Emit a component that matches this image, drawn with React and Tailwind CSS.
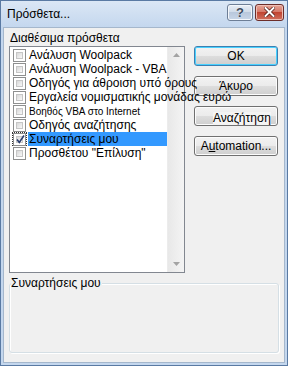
import React from "react";

const font = { fontFamily: '"Liberation Sans", Arial, sans-serif' };

function Check({ checked }) {
  return (
    <div className="w-[13px] h-[13px] border border-[#8e8f8f] bg-white p-[2px] shrink-0 relative">
      <div className="w-full h-full bg-gradient-to-br from-[#d8d8d8] to-[#f8f8f8] border border-[#c6c6c6]" />
      {checked && (
        <svg className="absolute left-[1px] top-[0px]" width="11" height="11" viewBox="0 0 11 11">
          <path d="M2 5.5 L4.3 8.5 L9 1.5" fill="none" stroke="#2a3d6e" strokeWidth="1.6" />
        </svg>
      )}
    </div>
  );
}

function Item({ text, checked, selected, small, focus }) {
  return (
    <div className="h-[14px] flex items-center relative">
      <div className={"ml-[2px] w-[15px] h-[14px] shrink-0 flex items-center justify-center " + (focus ? "outline outline-1 outline-dotted outline-[#333] -outline-offset-1" : "")}>
        <Check checked={checked} />
      </div>
      <div
        className={
          "ml-[1px] h-[14px] flex items-center whitespace-nowrap relative z-10 " +
          (selected ? "bg-[#3399ff] w-[139px]" : "") +
          (small ? " text-[10px]" : " text-[12px]")
        }
      >
        <span className="pl-[1px] text-black">{text}</span>
      </div>
    </div>
  );
}

function Btn({ children, def, extra }) {
  return (
    <div
      className={
        "h-[20px] w-[84px] rounded-[3px] border flex items-center justify-center text-[12px] text-black " +
        (def ? "border-[#3c7fb1] shadow-[inset_0_0_0_1px_#48d1ff]" : "border-[#707070] shadow-[inset_0_0_0_1px_#fcfcfc]") +
        " bg-[linear-gradient(#f2f2f2_0%,#ebebeb_50%,#dddddd_50%,#cfcfcf_100%)] " +
        (extra || "")
      }
    >
      {children}
    </div>
  );
}

export default function App() {
  const items = [
    { t: "Ανάλυση Woolpack" },
    { t: "Ανάλυση Woolpack - VBA" },
    { t: "Οδηγός για άθροιση υπό όρους" },
    { t: "Εργαλεία νομισματικής μονάδας ευρώ" },
    { t: "Βοηθός VBA στο Internet", small: true },
    { t: "Οδηγός αναζήτησης" },
    { t: "Συναρτήσεις μου", checked: true, selected: true, focus: true },
    { t: "Προσθέτου \"Επίλυση\"" },
  ];
  return (
    <div style={font} className="w-[288px] h-[366px] bg-[#c4d7ee] border border-[#5a7aa3] flex flex-col px-[2px] pb-[2px] overflow-hidden">
      {/* Title bar */}
      <div className="h-[26px] shrink-0 flex items-center -mx-[2px] px-[6px] bg-[linear-gradient(#dbe7f5,#c4d7ee)]">
        <div className="text-[12px] text-black flex-1">Πρόσθετα...</div>
        <div className="flex gap-[2px] -mr-[3px] -mt-[4px]">
          <div className="w-[26px] h-[17px] rounded-[3px] border border-[#6d7e96] bg-[linear-gradient(#e8eef6_0%,#cfdae8_50%,#b9c8dc_50%,#c8d6e8_100%)] flex items-center justify-center shadow-[inset_0_0_0_1px_#f4f7fb]">
            <span className="text-[13px] font-bold text-[#3c4a5c] leading-none" style={{ textShadow: "0 0 1px #fff" }}>?</span>
          </div>
          <div className="w-[29px] h-[17px] rounded-[3px] border border-[#6c2d29] bg-[linear-gradient(#e7a597_0%,#d47565_50%,#c14431_50%,#d0705f_100%)] flex items-center justify-center shadow-[inset_0_0_0_1px_#eebfb5]">
            <svg width="11" height="10" viewBox="0 0 11 10">
              <path d="M1.5 1 L9.5 9 M9.5 1 L1.5 9" stroke="#4a1510" strokeWidth="3.4" strokeLinecap="square" />
              <path d="M1.5 1 L9.5 9 M9.5 1 L1.5 9" stroke="#ffffff" strokeWidth="2" strokeLinecap="square" />
            </svg>
          </div>
        </div>
      </div>
      {/* Client */}
      <div className="flex-1 bg-[#f0f0f0] border border-[#a5b7cc] flex flex-col text-black">
        <div className="h-[18px] pl-[6px] pt-[3px] text-[12px] leading-[14px]">Διαθέσιμα πρόσθετα</div>
        <div className="flex pl-[5px] gap-[9px]">
          <div className="w-[176px] h-[227px] shrink-0 border border-[#828790] bg-white flex relative z-10">
            <div className="w-[157px] shrink-0 pt-[1px] flex flex-col relative z-10">
              {items.map((it, i) => (
                <Item key={i} text={it.t} checked={it.checked} selected={it.selected} small={it.small} focus={it.focus} />
              ))}
            </div>
            <div className="w-[17px] shrink-0 bg-[linear-gradient(90deg,#e8e8e8,#f4f4f4)] border-l border-[#ececec] flex flex-col justify-between items-center py-[6px]">
              <svg width="7" height="4" viewBox="0 0 7 4"><path d="M0 4 L3.5 0 L7 4 Z" fill="#a3a3a3" /></svg>
              <svg width="7" height="4" viewBox="0 0 7 4"><path d="M0 0 L7 0 L3.5 4 Z" fill="#a3a3a3" /></svg>
            </div>
          </div>
          <div className="flex flex-col gap-[10px]">
            <Btn def>OK</Btn>
            <Btn>Άκυρο</Btn>
            <Btn extra="pl-[12px]"><span className="bg-[#f4f4f4] mt-[4px] leading-[13px]">Αναζήτηση</span></Btn>
            <Btn>A<span className="underline">u</span>tomation...</Btn>
          </div>
        </div>
        <div className="mt-[10px] mx-[5px] h-[70px] rounded-[3px] border border-[#d5dfe5] shadow-[inset_1px_1px_0_#fff,1px_1px_0_#fff] relative">
          <div className="absolute left-[1px] -top-[7px] bg-[#f0f0f0] text-[12px] leading-[13px] pr-[1px]">Συναρτήσεις μου</div>
        </div>
      </div>
    </div>
  );
}
